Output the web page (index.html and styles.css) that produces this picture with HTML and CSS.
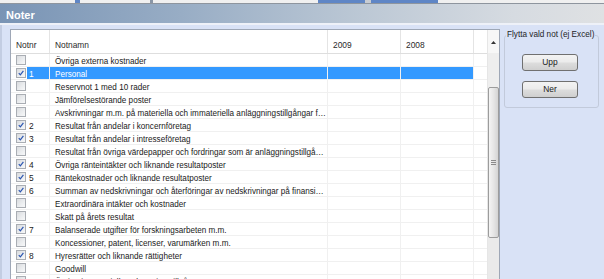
FILE: index.html
```html
<!DOCTYPE html>
<html lang="sv">
<head>
<meta charset="utf-8">
<title>Noter</title>
<link rel="stylesheet" href="styles.css">
</head>
<body>
<div class="tabs">
  <div class="seg s1"></div><div class="seg s2 blue"></div><div class="seg s3"></div><div class="seg s4 gray"></div><div class="seg s5"></div><div class="seg s6 blue"></div><div class="seg s7 dark"></div><div class="seg s8 blue"></div><div class="seg s9"></div>
</div>
<div class="titlebar">Noter</div>
<div class="content">
  <div class="grid">
    <div class="grid-main">
      <div class="hdr">
        <div class="h c-nr">Notnr</div>
        <div class="h c-name">Notnamn</div>
        <div class="h c-y">2009</div>
        <div class="h c-y">2008</div>
        <div class="h c-fill"></div>
      </div>
      <div class="row"><div class="c-nr"><span class="cb"></span><span class="nr"></span></div><div class="c-name">Övriga externa kostnader</div><div class="c-y"></div><div class="c-y"></div><div class="c-fill"></div></div>
      <div class="row sel"><div class="c-nr"><span class="cb on"><svg viewBox="0 0 10 10"><path d="M2.2 5.2 L4.2 7.4 L8 2.4"/></svg></span><span class="nr">1</span></div><div class="c-name">Personal</div><div class="c-y"></div><div class="c-y"></div><div class="c-fill"></div></div>
      <div class="row"><div class="c-nr"><span class="cb"></span><span class="nr"></span></div><div class="c-name">Reservnot 1 med 10 rader</div><div class="c-y"></div><div class="c-y"></div><div class="c-fill"></div></div>
      <div class="row"><div class="c-nr"><span class="cb"></span><span class="nr"></span></div><div class="c-name">Jämförelsestörande poster</div><div class="c-y"></div><div class="c-y"></div><div class="c-fill"></div></div>
      <div class="row"><div class="c-nr"><span class="cb"></span><span class="nr"></span></div><div class="c-name">Avskrivningar m.m. på materiella och immateriella anläggningstillgångar för rörelsen</div><div class="c-y"></div><div class="c-y"></div><div class="c-fill"></div></div>
      <div class="row"><div class="c-nr"><span class="cb on"><svg viewBox="0 0 10 10"><path d="M2.2 5.2 L4.2 7.4 L8 2.4"/></svg></span><span class="nr">2</span></div><div class="c-name">Resultat från andelar i koncernföretag</div><div class="c-y"></div><div class="c-y"></div><div class="c-fill"></div></div>
      <div class="row"><div class="c-nr"><span class="cb on"><svg viewBox="0 0 10 10"><path d="M2.2 5.2 L4.2 7.4 L8 2.4"/></svg></span><span class="nr">3</span></div><div class="c-name">Resultat från andelar i intresseföretag</div><div class="c-y"></div><div class="c-y"></div><div class="c-fill"></div></div>
      <div class="row"><div class="c-nr"><span class="cb"></span><span class="nr"></span></div><div class="c-name">Resultat från övriga värdepapper och fordringar som är anläggningstillgångar</div><div class="c-y"></div><div class="c-y"></div><div class="c-fill"></div></div>
      <div class="row"><div class="c-nr"><span class="cb on"><svg viewBox="0 0 10 10"><path d="M2.2 5.2 L4.2 7.4 L8 2.4"/></svg></span><span class="nr">4</span></div><div class="c-name">Övriga ränteintäkter och liknande resultatposter</div><div class="c-y"></div><div class="c-y"></div><div class="c-fill"></div></div>
      <div class="row"><div class="c-nr"><span class="cb on"><svg viewBox="0 0 10 10"><path d="M2.2 5.2 L4.2 7.4 L8 2.4"/></svg></span><span class="nr">5</span></div><div class="c-name">Räntekostnader och liknande resultatposter</div><div class="c-y"></div><div class="c-y"></div><div class="c-fill"></div></div>
      <div class="row"><div class="c-nr"><span class="cb on"><svg viewBox="0 0 10 10"><path d="M2.2 5.2 L4.2 7.4 L8 2.4"/></svg></span><span class="nr">6</span></div><div class="c-name">Summan av nedskrivningar och återföringar av nedskrivningar på finansiella anläggningstillgångar</div><div class="c-y"></div><div class="c-y"></div><div class="c-fill"></div></div>
      <div class="row"><div class="c-nr"><span class="cb"></span><span class="nr"></span></div><div class="c-name">Extraordinära intäkter och kostnader</div><div class="c-y"></div><div class="c-y"></div><div class="c-fill"></div></div>
      <div class="row"><div class="c-nr"><span class="cb"></span><span class="nr"></span></div><div class="c-name">Skatt på årets resultat</div><div class="c-y"></div><div class="c-y"></div><div class="c-fill"></div></div>
      <div class="row"><div class="c-nr"><span class="cb on"><svg viewBox="0 0 10 10"><path d="M2.2 5.2 L4.2 7.4 L8 2.4"/></svg></span><span class="nr">7</span></div><div class="c-name">Balanserade utgifter för forskningsarbeten m.m.</div><div class="c-y"></div><div class="c-y"></div><div class="c-fill"></div></div>
      <div class="row"><div class="c-nr"><span class="cb"></span><span class="nr"></span></div><div class="c-name">Koncessioner, patent, licenser, varumärken m.m.</div><div class="c-y"></div><div class="c-y"></div><div class="c-fill"></div></div>
      <div class="row"><div class="c-nr"><span class="cb on"><svg viewBox="0 0 10 10"><path d="M2.2 5.2 L4.2 7.4 L8 2.4"/></svg></span><span class="nr">8</span></div><div class="c-name">Hyresrätter och liknande rättigheter</div><div class="c-y"></div><div class="c-y"></div><div class="c-fill"></div></div>
      <div class="row"><div class="c-nr"><span class="cb"></span><span class="nr"></span></div><div class="c-name">Goodwill</div><div class="c-y"></div><div class="c-y"></div><div class="c-fill"></div></div>
      <div class="row"><div class="c-nr"><span class="cb"></span><span class="nr"></span></div><div class="c-name">Övriga immateriella anläggningstillgångar</div><div class="c-y"></div><div class="c-y"></div><div class="c-fill"></div></div>
    </div>
    <div class="vscroll">
      <div class="sb-up"><svg viewBox="0 0 7 4"><path d="M0 4 L3.5 0 L7 4 Z"/></svg></div>
      <div class="sb-track-top"></div>
      <div class="sb-thumb"><span class="grip"></span><span class="grip"></span><span class="grip"></span></div>
      <div class="sb-track"></div>
    </div>
  </div>
  <div class="panel">
    <fieldset class="group">
      <legend>Flytta vald not (ej Excel)</legend>
      <div class="btns">
        <button class="btn" type="button">Upp</button>
        <button class="btn" type="button">Ner</button>
      </div>
    </fieldset>
  </div>
</div>
</body>
</html>
```

FILE: styles.css
```css
* { box-sizing: border-box; }
html, body { margin: 0; padding: 0; }
body {
  width: 604px;
  height: 279px;
  overflow: hidden;
  background: #d9e2f6;
  font-family: "Liberation Sans", Arial, sans-serif;
  font-size: 8.4px;
  color: #1a1a1a;
  display: flex;
  flex-direction: column;
}

/* top tab strip */
.tabs { display: flex; flex: none; height: 4px; background: #f0f0f0; border-bottom: 1px solid #8e959e; }
.seg { height: 3px; }
.s1 { width: 75px; }
.s2 { width: 5px; }
.s3 { width: 70px; }
.s4 { width: 3px; }
.s5 { width: 165px; }
.s6 { width: 47px; }
.s7 { width: 6px; }
.s8 { width: 67px; }
.s9 { flex: 1; }
.blue { background: #5f86c6; }
.gray { background: #8a96a6; }
.dark { background: #c8ccd2; }

/* title bar */
.titlebar {
  flex: none;
  height: 21px;
  padding: 5px 0 0 6px;
  font-size: 11px;
  font-weight: bold;
  color: #ffffff;
  line-height: 12px;
  background: linear-gradient(to right, #7994b5 0%, #98adc5 30%, #bcc8d5 60%, #d6dbe1 85%, #dfe1e3 100%);
  border-bottom: 2px solid #eef1f8;
}

.content {
  flex: 1;
  display: flex;
  padding-top: 4px;
  padding-left: 8px;
  border-left: 2px solid #c3cde2;
  min-height: 0;
}

/* grid */
.grid {
  width: 490px;
  flex: none;
  display: flex;
  border: 1px solid #9ea7b6;
  border-bottom: none;
  background: #ffffff;
  align-self: stretch;
}
.grid-main { width: 476px; display: flex; flex-direction: column; }

.hdr {
  display: grid;
  grid-template-columns: 39px 278px 73px 73px 13px;
  height: 24px;
  flex: none;
  border-bottom: 1px solid #dedede;
  background: #ffffff;
}
.h {
  padding: 9px 0 0 5px;
  line-height: 13px;
  color: #2a2a2a;
  border-right: 1px solid #e4e4e4;
}
.hdr .c-fill { border-right: none; }

.row {
  display: grid;
  grid-template-columns: 39px 278px 73px 73px 13px;
  height: 13px;
  flex: none;
  font-size: 8.15px;
  border-bottom: 1px solid #f0f0f0;
}
.row > div {
  border-right: 1px solid #f0f0f0;
  white-space: nowrap;
  overflow: hidden;
  text-overflow: ellipsis;
  line-height: 13px;
}
.row > .c-fill { border-right: none; }
.row .c-nr { display: flex; align-items: center; padding-left: 5px; }
.row .c-name { padding: 1px 1px 0 5px; }

.cb {
  width: 10px;
  height: 10px;
  flex: none;
  border: 1px solid #a9adb3;
  background: linear-gradient(135deg, #d9dbde 0%, #eceef0 60%, #f7f8f9 100%);
  display: flex;
  align-items: center;
  justify-content: center;
}
.cb svg { width: 8px; height: 8px; }
.cb path { fill: none; stroke: #2b55b0; stroke-width: 1.5; }
.nr { flex: 1; margin-left: 1px; height: 12px; padding: 1px 0 0 2px; line-height: 12px; font-size: 8.4px; overflow: hidden; }

.row.sel .nr,
.row.sel .c-name,
.row.sel .c-y { background: #3399ff; color: #ffffff; }

/* scrollbar */
.vscroll {
  width: 12px;
  flex: none;
  display: flex;
  flex-direction: column;
  background: #eeeeee;
  border-left: 1px solid #e6e6e6;
}
.sb-up {
  height: 23px;
  flex: none;
  background: #f7f7f7;
  display: flex;
  align-items: center;
  justify-content: center;
  padding-top: 2px;
}
.sb-up svg { width: 5px; height: 3px; }
.sb-up path { fill: #333333; }
.sb-track-top { height: 34px; flex: none; background: #eeeeee; }
.sb-thumb {
  height: 151px;
  flex: none;
  border: 1px solid #9c9c9c;
  border-radius: 2px;
  background: linear-gradient(to right, #f4f4f4 0%, #e6e6e6 50%, #d4d4d4 100%);
  display: flex;
  flex-direction: column;
  align-items: center;
  justify-content: center;
  gap: 1px;
}
.grip { width: 5px; height: 1px; background: #8a8a8a; }
.sb-track { flex: 1; background: #eaeaea; }

/* right panel */
.panel {
  flex: 1;
  padding: 1px 5px 0 4px;
}
.group {
  margin: 0;
  padding: 0;
  min-width: 0;
  height: 78px;
  border: 1px solid #c2cadb;
  border-radius: 3px;
}
.group legend {
  padding: 0 1px;
  margin-left: 1px;
  line-height: 10px;
  font-size: 8.2px;
  white-space: nowrap;
  color: #1e1e1e;
}
.btns {
  display: flex;
  flex-direction: column;
  align-items: center;
  gap: 10px;
  padding-top: 14px;
  padding-right: 3px;
}
.btn {
  width: 56px;
  height: 17px;
  margin: 0;
  padding: 0;
  border: 1px solid #707070;
  border-radius: 3px;
  background: linear-gradient(to bottom, #f3f3f3 0%, #ebebeb 48%, #dddddd 52%, #cfcfcf 100%);
  font-family: "Liberation Sans", Arial, sans-serif;
  font-size: 8.4px;
  color: #1a1a1a;
  line-height: 15px;
}
```
